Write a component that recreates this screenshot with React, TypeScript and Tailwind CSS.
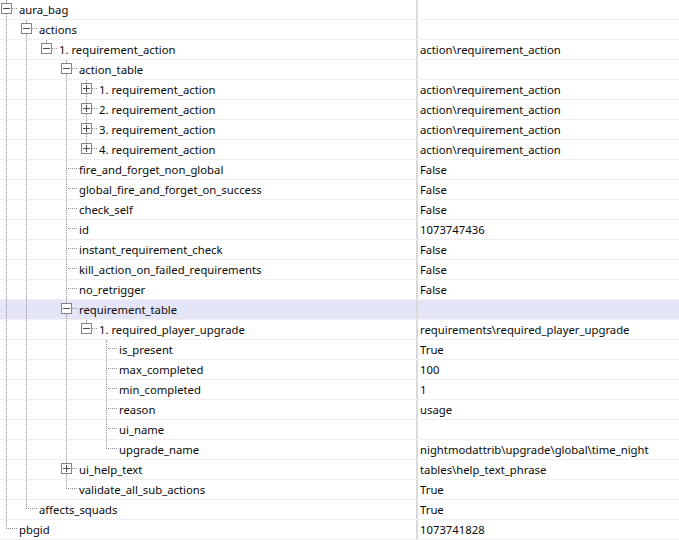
type Row = {
  name: string
  level: number
  box?: 'minus' | 'plus'
  value?: string
  selected?: boolean
}

const rows: Row[] = [
  { name: 'aura_bag', level: 0, box: 'minus' },
  { name: 'actions', level: 1, box: 'minus' },
  { name: '1. requirement_action', level: 2, box: 'minus', value: 'action\\requirement_action' },
  { name: 'action_table', level: 3, box: 'minus' },
  { name: '1. requirement_action', level: 4, box: 'plus', value: 'action\\requirement_action' },
  { name: '2. requirement_action', level: 4, box: 'plus', value: 'action\\requirement_action' },
  { name: '3. requirement_action', level: 4, box: 'plus', value: 'action\\requirement_action' },
  { name: '4. requirement_action', level: 4, box: 'plus', value: 'action\\requirement_action' },
  { name: 'fire_and_forget_non_global', level: 3, value: 'False' },
  { name: 'global_fire_and_forget_on_success', level: 3, value: 'False' },
  { name: 'check_self', level: 3, value: 'False' },
  { name: 'id', level: 3, value: '1073747436' },
  { name: 'instant_requirement_check', level: 3, value: 'False' },
  { name: 'kill_action_on_failed_requirements', level: 3, value: 'False' },
  { name: 'no_retrigger', level: 3, value: 'False' },
  { name: 'requirement_table', level: 3, box: 'minus', selected: true },
  { name: '1. required_player_upgrade', level: 4, box: 'minus', value: 'requirements\\required_player_upgrade' },
  { name: 'is_present', level: 5, value: 'True' },
  { name: 'max_completed', level: 5, value: '100' },
  { name: 'min_completed', level: 5, value: '1' },
  { name: 'reason', level: 5, value: 'usage' },
  { name: 'ui_name', level: 5 },
  { name: 'upgrade_name', level: 5, value: 'nightmodattrib\\upgrade\\global\\time_night' },
  { name: 'ui_help_text', level: 3, box: 'plus', value: 'tables\\help_text_phrase' },
  { name: 'validate_all_sub_actions', level: 3, value: 'True' },
  { name: 'affects_squads', level: 1, value: 'True' },
  { name: 'pbgid', level: 0, value: '1073741828' },
]

// does a later row sit at `level` before the tree climbs above it?
function continues(i: number, level: number) {
  for (let j = i + 1; j < rows.length; j++) {
    if (rows[j].level < level) return false
    if (rows[j].level === level) return true
  }
  return false
}

const LINE = '#8f8f8f'

function TreeLines({ i }: { i: number }) {
  const row = rows[i]
  const L = row.level
  const cx = 6 + 20 * L + 0.5
  const hasNext = continues(i, L)
  const width = 20 * L + 19
  return (
    <svg width={width} height={19} className="shrink-0 overflow-visible" shapeRendering="crispEdges">
      {Array.from({ length: L }, (_, k) =>
        continues(i, k) ? (
          <line key={k} x1={6 + 20 * k + 0.5} y1={0} x2={6 + 20 * k + 0.5} y2={20} stroke={LINE} strokeDasharray="1 1" />
        ) : null
      )}
      {row.box ? (
        <>
          <line x1={cx} y1={0} x2={cx} y2={3} stroke={LINE} strokeDasharray="1 1" />
          {hasNext && <line x1={cx} y1={14} x2={cx} y2={20} stroke={LINE} strokeDasharray="1 1" />}
          <line x1={12 + 20 * L} y1={8.5} x2={width - 1} y2={8.5} stroke={LINE} strokeDasharray="1 1" />
          <rect x={1 + 20 * L + 0.5} y={3.5} width={10} height={10} fill="#fff" stroke="#858585" />
          <line x1={3 + 20 * L} y1={8.5} x2={10 + 20 * L} y2={8.5} stroke="#4a4a4a" />
          {row.box === 'plus' && <line x1={cx} y1={5} x2={cx} y2={12} stroke="#4a4a4a" />}
        </>
      ) : (
        <>
          <line x1={cx} y1={0} x2={cx} y2={hasNext ? 20 : 9} stroke={LINE} strokeDasharray="1 1" />
          <line x1={cx + 1} y1={8.5} x2={width - 1} y2={8.5} stroke={LINE} strokeDasharray="1 1" />
        </>
      )}
    </svg>
  )
}

export default function App() {
  return (
    <div className="w-[679px] h-[540px] bg-white overflow-hidden text-[11.3px] text-[#0a0a0a] font-['Noto_Sans',sans-serif]">
      {rows.map((row, i) => (
        <div
          key={i}
          className={`flex h-5 border-b border-[#efefef] leading-[19px] ${row.selected ? 'bg-[#e5e5f8]' : ''}`}
        >
          <div className="flex w-[418px] shrink-0 border-r-2 border-[#d9d9d9] whitespace-nowrap">
            <TreeLines i={i} />
            <span>{row.name}</span>
          </div>
          <div className="pl-[2px] whitespace-nowrap">{row.value ?? ''}</div>
        </div>
      ))}
    </div>
  )
}
